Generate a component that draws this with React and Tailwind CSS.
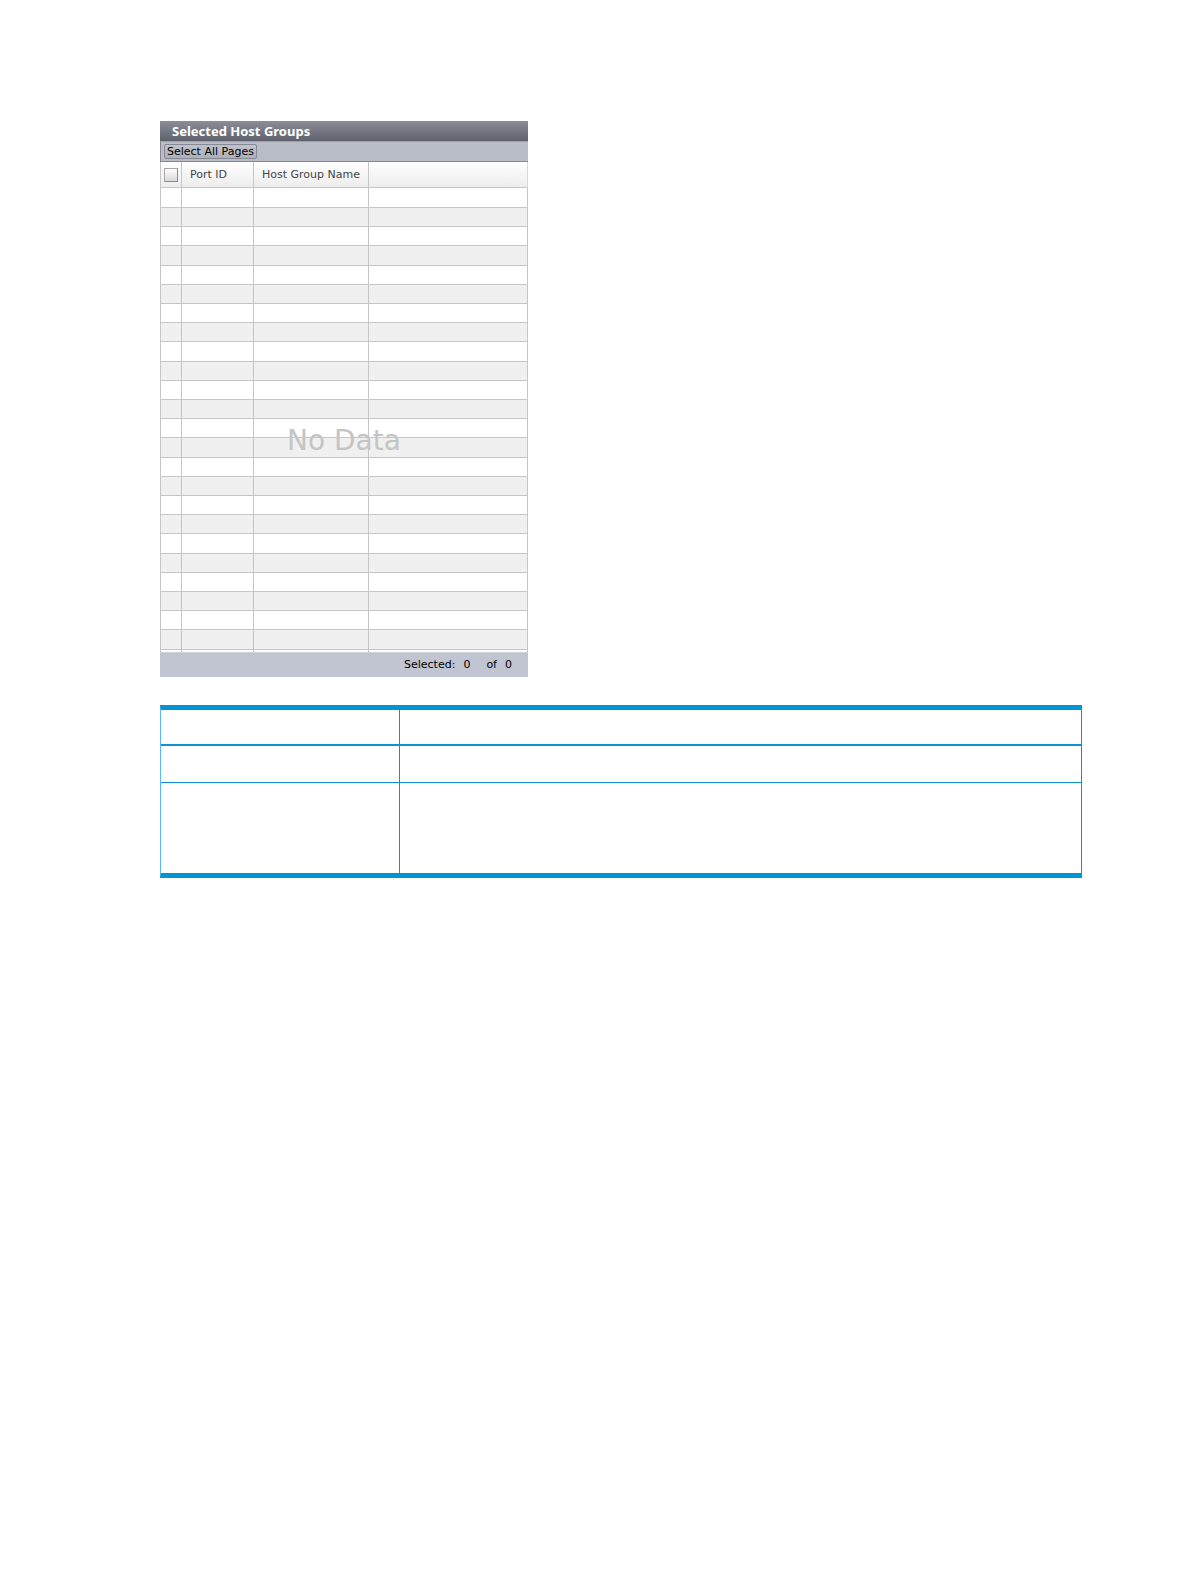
const ROW_COUNT = 24;

// the grid runs slightly over 19px per row, so some rows take the spare pixel
const rows = Array.from({ length: ROW_COUNT }, (_, i) => ({
  id: i,
  tall: i === 0 || i % 5 === 3,
  shaded: i % 2 === 1,
}));

export default function App() {
  return (
    <main className="min-h-screen bg-white pt-[121px] pb-16 pl-40 pr-[107px] font-['DejaVu_Sans',sans-serif]">
      <HostGroupsPanel />
      <DescriptionTable />
    </main>
  );
}

function HostGroupsPanel() {
  return (
    <section className="relative w-[368px] max-w-full">
      {/* Title bar */}
      <h2 className="flex h-5 items-center bg-linear-to-b from-[#8b8e98] to-[#5f626d] pl-3 text-[13px] font-bold leading-4 text-white font-['Noto_Sans',sans-serif]">
        Selected Host Groups
      </h2>

      {/* Toolbar */}
      <div className="flex h-[21px] items-center border-t border-b border-l border-t-[#9da0ac] border-b-[#85868f] border-l-[#85868f] bg-[#b8bcc7] pl-[3px]">
        <button
          type="button"
          className="flex h-[15px] items-center whitespace-nowrap rounded-xs border border-[#858994] bg-linear-to-b from-[#c0c3cd] to-[#adb0bb] px-[2px] text-[11px] leading-3 text-black"
        >
          Select All Pages
        </button>
      </div>

      <GroupsTable />

      {/* Empty state, laid over the grid */}
      <div className="pointer-events-none absolute inset-0 flex items-center justify-center pt-21">
        <span className="text-[28px] leading-8 text-[#c4c4c4]">No Data</span>
      </div>

      {/* Selection count */}
      <div className="flex h-[25px] items-center justify-end border-t border-[#cfd1da] bg-[#c1c4d1] pr-4 text-[11px] leading-3 text-black">
        <span>Selected:</span>
        <span className="ml-2">0</span>
        <span className="ml-4">of</span>
        <span className="ml-2">0</span>
      </div>
    </section>
  );
}

function GroupsTable() {
  return (
    <table className="w-full table-fixed border-separate border-spacing-0 border-l border-[#c6c6c6]">
      <colgroup>
        <col className="w-[21px]" />
        <col className="w-[72px]" />
        <col className="w-[115px]" />
        <col />
      </colgroup>
      <thead>
        <tr className="h-[26px] bg-linear-to-b from-white to-[#ececec] text-left text-[11px] leading-3 text-[#444]">
          <th className="border-r border-b border-[#c6c6c6] p-0">
            <input
              type="checkbox"
              aria-label="Select all"
              className="ml-[3px] block h-[14px] w-[14px] appearance-none border border-[#8c8c8c] border-t-[#a8a8a8] border-l-[#a8a8a8] bg-linear-to-b from-white to-[#d8d8d8]"
            />
          </th>
          <th className="border-r border-b border-[#c6c6c6] py-0 pr-0 pl-2 font-normal">Port ID</th>
          <th className="border-r border-b border-[#c6c6c6] py-0 pr-0 pl-2 font-normal whitespace-nowrap">
            Host Group Name
          </th>
          <th className="border-r border-b border-[#c6c6c6] border-r-[#dadada] p-0" />
        </tr>
      </thead>
      <tbody>
        {rows.map((row) => (
          <tr
            key={row.id}
            className={`${row.tall ? 'h-5' : 'h-[19px]'} ${row.shaded ? 'bg-[#f0f0f0]' : 'bg-white'}`}
          >
            <GridCells className="border-b" />
          </tr>
        ))}
        {/* Start of the next row, cut off by the footer */}
        <tr className="h-[2px] bg-white">
          <GridCells />
        </tr>
      </tbody>
    </table>
  );
}

function GridCells({ className = '' }) {
  return (
    <>
      <td className={`border-r border-[#c6c6c6] p-0 ${className}`} />
      <td className={`border-r border-[#c6c6c6] p-0 ${className}`} />
      <td className={`border-r border-[#c6c6c6] p-0 ${className}`} />
      <td className={`border-r border-[#c6c6c6] p-0 ${className}`} />
    </>
  );
}

function DescriptionTable() {
  return (
    <table className="mt-7 w-full table-fixed border-separate border-spacing-0 border-x border-y-5 border-[#0096d6] border-l-[#5fb8e0]">
      <colgroup>
        <col className="w-[239px]" />
        <col />
      </colgroup>
      <tbody>
        <tr className="h-9">
          <td className="border-r border-b-2 border-[#0d94d0] p-0" />
          <td className="border-b-2 border-[#0d94d0] p-0" />
        </tr>
        <tr className="h-[37px]">
          <td className="border-r border-b border-[#0d94d0] p-0" />
          <td className="border-b border-[#0d94d0] p-0" />
        </tr>
        <tr className="h-[90px]">
          <td className="border-r border-[#0d94d0] p-0" />
          <td className="p-0" />
        </tr>
      </tbody>
    </table>
  );
}
